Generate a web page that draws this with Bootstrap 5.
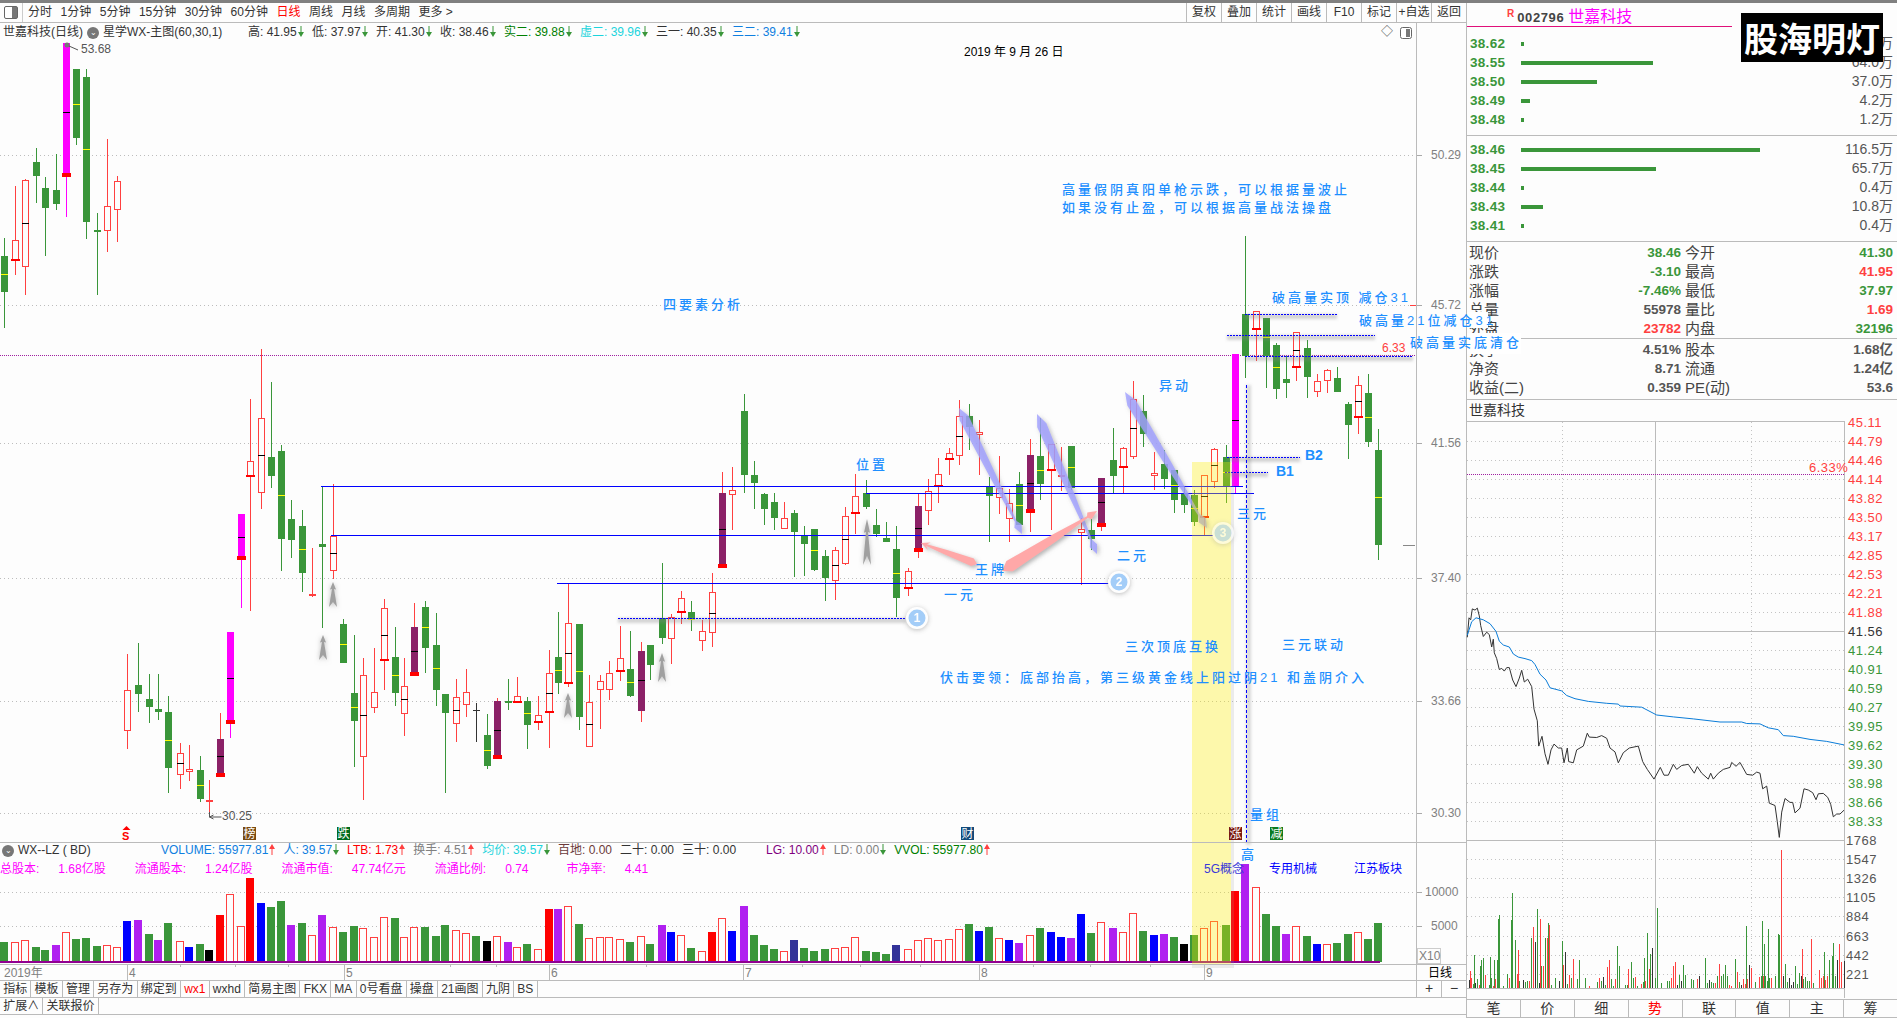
<!DOCTYPE html>
<html lang="zh-CN">
<head>
    <meta charset="UTF-8">
    <meta name="viewport" content="width=device-width, initial-scale=1.0">
    <title>世嘉科技</title>
    <link href="https://cdn.jsdelivr.net/npm/bootstrap@5.3.3/dist/css/bootstrap.min.css" rel="stylesheet">
    <style>
        html, body { height: 100%; overflow: hidden; }
        body {
            background-color: #fdfdfd;
            color: #333;
            font: 12px/1.2 "Liberation Sans", "Noto Sans CJK SC", sans-serif;
        }
        .screen { height: 1018px; border-top: 3px solid #808080; }
        .left-col { width: 1466px; flex: none; position: relative; z-index: 2; }
        .top-tools { height: 19px; border-bottom: 1px solid #bbb; box-sizing: content-box; white-space: nowrap; }
        .side-btn { width: 23px; padding-left: 4px; border-right: 1px solid #ccc; }
        .side-ico { width: 14px; height: 13px; border: 1px solid #666; border-radius: 2px; background: linear-gradient(90deg, #fff 55%, #777 55%); }
        .period-list { gap: 8.5px; padding-left: 5px; }
        .period-on { color: #f00; }
        .tool-cell { width: 35px; border-left: 1px solid #bbb; text-align: center; line-height: 18px; }
        .plot-wrap { height: 957px; }
        #plot { position: absolute; left: 0; top: 0; overflow: visible; z-index: 0; }
        #plot text { font-family: "Liberation Sans", "Noto Sans CJK SC", sans-serif; font-size: 12px; }
        #plot .note { fill: #1e8fff; font-size: 13px; letter-spacing: 3px; font-weight: 500; }
        #plot .note-b { fill: #1e8fff; font-size: 14px; font-weight: 700; }
        #plot .axis-txt { fill: #808080; }
        #plot .tag { fill: #fff; font-size: 12px; }
        .quote-row { height: 19px; padding-left: 3px; position: relative; white-space: nowrap; line-height: 19px; }
        .quote-head { width: 245px; }
        .quote-ico { width: 12px; height: 12px; border-radius: 50%; background: #777; color: #fff; font-size: 8px; line-height: 12px; text-align: center; margin: 0 4px; }
        .quote-item { width: 64px; }
        .quote-wide { width: 76px; }
        .arr { width: 6px; height: 11px; margin-left: 1px; vertical-align: -1px; }
        .arr-dn { fill: #3a963a; }
        .arr-up { fill: #ff4040; }
        .c-green { color: #008000; }
        .c-cyan { color: #1cd4dc; }
        .c-blue { color: #0f7fe0; }
        .c-red { color: #f00; }
        .c-gray { color: #808080; }
        .c-brown { color: #6b3a3a; }
        .c-purple { color: #800080; }
        .c-vol { color: #0f7fe0; }
        .vol-head { position: relative; margin-top: 801px; white-space: nowrap; }
        .vol-line1 { height: 17px; line-height: 15px; padding-left: 2px; }
        .vol-name { width: 159px; height: 15px; }
        .vol-gap { margin-right: 8px; }
        .vol-far { margin-left: 30px; }
        .vol-line2 { height: 19px; line-height: 19px; color: #ff00ff; gap: 29px; }
        .cap-item { gap: 19px; }
        .cap-wide { margin-right: 9px; }
        .bot-row { height: 17px; border-top: 1px solid #bbb; white-space: nowrap; line-height: 16px; }
        .bot-row-2 { height: 18px; border-bottom: 1px solid #bbb; line-height: 17px; }
        .bot-btn { padding: 0 3.2px; border-right: 1px solid #bbb; }
        .zoom-cells { width: 50px; margin-right: 0; }
        .zoom-cell { width: 25px; border-left: 1px solid #bbb; text-align: center; font-size: 14px; line-height: 15px; }
        .right-col { flex: 1; border-left: 1px solid #bbb; position: relative; color: #555; }
        .stock-head { height: 24px; width: 265px; border-bottom: 1px solid #e0107a; white-space: nowrap; padding-left: 40px; line-height: 22px; }
        .stock-r { color: #ff4040; font-weight: 700; font-size: 10px; vertical-align: 5px; margin-right: 3px; }
        .stock-code { color: #444; font-size: 13px; font-weight: 700; letter-spacing: .6px; margin-right: 4px; }
        .stock-name { color: #ff00ff; font-size: 16px; }
        .logo-box {
            position: absolute; top: 10px; right: 14px; width: 142px; height: 49px; background: #000; color: #fff;
            font-size: 34px; font-weight: 700; line-height: 49px; text-align: center; font-family: "Noto Sans CJK SC", sans-serif; white-space: nowrap;
            z-index: 3;
        }
        .book { font-size: 14px; }
        .book-sell { padding: 7px 0 6px; border-bottom: 1px solid #bbb; }
        .book-buy { padding: 4px 0 6px; border-bottom: 1px solid #bbb; }
        .book-row { height: 19px; line-height: 19px; padding: 0 4px 0 3px; }
        .book-price { width: 51px; flex: none; color: #3a963a; font-weight: 700; font-size: 13.5px; letter-spacing: .3px; }
        .book-bar { height: 4px; background: #3a963a; }
        .stat-row { height: 19px; line-height: 19px; padding: 0 4px 0 2px; font-size: 13.5px; font-weight: 700; color: #555; }
        .stat-label { width: 60px; font-weight: 400; font-size: 15px; color: #444; white-space: nowrap; }
        .stat-val { width: 152px; text-align: right; }
        .stat-label2 { width: 32px; margin-left: 4px; font-weight: 400; font-size: 15px; color: #444; white-space: nowrap; }
        .stat-end { flex: 1; text-align: right; }
        .val-green { color: #3a963a; }
        .val-red { color: #ff4040; }
        .stats-a { padding-top: 1px; border-bottom: 1px solid #bbb; }
        .stats-b { padding: 1px 0 2px; border-bottom: 1px solid #bbb; }
        .mini-title { height: 21px; line-height: 21px; padding-left: 2px; font-size: 14px; color: #333; }
        #mini { display: block; overflow: visible; }
        #mini text { font-family: "Liberation Sans", sans-serif; font-size: 13px; letter-spacing: .5px; }
        .tab-row { height: 17px; border-top: 1px solid #bbb; border-bottom: 1px solid #bbb; box-sizing: content-box; }
        .tab-cell { flex: 1; text-align: center; border-right: 1px solid #bbb; font-size: 14px; line-height: 17px; color: #333; }
        .tab-cell:last-child { border-right: 0; }
        .tab-on { color: #f00; }
    </style>
</head>
<body>
<svg width="0" height="0" class="d-block">
    <symbol id="ar-dn" viewBox="0 0 6 11"><rect x="2.5" y="0" width="1" height="7"/><path d="M0 6h6l-3 5z"/></symbol>
    <symbol id="ar-up" viewBox="0 0 6 11"><rect x="2.5" y="4" width="1" height="7"/><path d="M0 5h6l-3-5z"/></symbol>
</svg>
<div class="screen d-flex">
    <div class="left-col d-flex flex-column">
        <div class="top-tools d-flex justify-content-between">
            <div class="d-flex align-items-center">
                <div class="side-btn h-100 d-flex align-items-center"><div class="side-ico"></div></div>
                <div class="period-list d-flex align-items-center">
                    <span>分时</span><span>1分钟</span><span>5分钟</span><span>15分钟</span><span>30分钟</span><span>60分钟</span>
                    <span class="period-on">日线</span><span>周线</span><span>月线</span><span>多周期</span><span>更多 &gt;</span>
                </div>
            </div>
            <div class="d-flex">
                <div class="tool-cell">复权</div><div class="tool-cell">叠加</div><div class="tool-cell">统计</div><div class="tool-cell">画线</div>
                <div class="tool-cell">F10</div><div class="tool-cell">标记</div><div class="tool-cell">+自选</div><div class="tool-cell">返回</div>
            </div>
        </div>
        <div class="plot-wrap position-relative">
            <svg id="plot" width="1466" height="957" viewBox="0 23 1466 957"></svg>
            <div class="quote-row d-flex">
                <div class="quote-head d-flex align-items-center">世嘉科技(日线)<span class="quote-ico">&#8964;</span>星学WX-主图(60,30,1)</div>
                <div class="quote-item">高: 41.95<svg class="arr arr-dn"><use href="#ar-dn"/></svg></div>
                <div class="quote-item">低: 37.97<svg class="arr arr-dn"><use href="#ar-dn"/></svg></div>
                <div class="quote-item">开: 41.30<svg class="arr arr-dn"><use href="#ar-dn"/></svg></div>
                <div class="quote-item">收: 38.46<svg class="arr arr-dn"><use href="#ar-dn"/></svg></div>
                <div class="quote-wide c-green">实二: 39.88<svg class="arr arr-dn"><use href="#ar-dn"/></svg></div>
                <div class="quote-wide c-cyan">虚二: 39.96<svg class="arr arr-dn"><use href="#ar-dn"/></svg></div>
                <div class="quote-wide">三一: 40.35<svg class="arr arr-dn"><use href="#ar-dn"/></svg></div>
                <div class="quote-wide c-blue">三二: 39.41<svg class="arr arr-dn"><use href="#ar-dn"/></svg></div>
            </div>
            <div class="vol-head">
                <div class="vol-line1 d-flex">
                    <div class="vol-name d-flex align-items-center"><span class="quote-ico ms-0">&#8964;</span>WX--LZ ( BD)</div>
                    <div class="vol-gap c-vol">VOLUME: 55977.81<svg class="arr arr-up"><use href="#ar-up"/></svg></div>
                    <div class="vol-gap c-vol">人: 39.57<svg class="arr arr-dn"><use href="#ar-dn"/></svg></div>
                    <div class="vol-gap c-red">LTB: 1.73<svg class="arr arr-up"><use href="#ar-up"/></svg></div>
                    <div class="vol-gap c-gray">换手: 4.51<svg class="arr arr-up"><use href="#ar-up"/></svg></div>
                    <div class="vol-gap c-cyan">均价: 39.57<svg class="arr arr-dn"><use href="#ar-dn"/></svg></div>
                    <div class="vol-gap c-brown">百地: 0.00</div>
                    <div class="vol-gap">二十: 0.00</div>
                    <div>三十: 0.00</div>
                    <div class="vol-gap vol-far c-purple">LG: 10.00<svg class="arr arr-up"><use href="#ar-up"/></svg></div>
                    <div class="vol-gap c-gray">LD: 0.00<svg class="arr arr-dn"><use href="#ar-dn"/></svg></div>
                    <div class="c-green">VVOL: 55977.80<svg class="arr arr-up"><use href="#ar-up"/></svg></div>
                </div>
                <div class="vol-line2 d-flex">
                    <div class="cap-item d-flex"><span>总股本:</span><span>1.68亿股</span></div>
                    <div class="cap-item d-flex"><span>流通股本:</span><span>1.24亿股</span></div>
                    <div class="cap-item d-flex"><span>流通市值:</span><span>47.74亿元</span></div>
                    <div class="cap-item d-flex cap-wide"><span>流通比例:</span><span>0.74</span></div>
                    <div class="cap-item d-flex"><span>市净率:</span><span>4.41</span></div>
                </div>
            </div>
        </div>
        <div class="bot-row d-flex justify-content-between">
            <div class="d-flex">
                <div class="bot-btn">指标</div><div class="bot-btn">模板</div><div class="bot-btn">管理</div><div class="bot-btn">另存为</div>
                <div class="bot-btn">绑定到</div><div class="bot-btn c-red">wx1</div><div class="bot-btn">wxhd</div><div class="bot-btn">简易主图</div>
                <div class="bot-btn">FKX</div><div class="bot-btn">MA</div><div class="bot-btn">0号看盘</div><div class="bot-btn">操盘</div>
                <div class="bot-btn">21画图</div><div class="bot-btn">九阴</div><div class="bot-btn">BS</div>
            </div>
            <div class="zoom-cells d-flex">
                <div class="zoom-cell">+</div><div class="zoom-cell">&minus;</div>
            </div>
        </div>
        <div class="bot-row bot-row-2 d-flex">
            <div class="bot-btn">扩展∧</div><div class="bot-btn">关联报价</div>
        </div>
    </div>

    <div class="right-col">
        <div class="stock-head"><span class="stock-r">R</span><span class="stock-code">002796</span><span class="stock-name">世嘉科技</span></div>
        <div class="logo-box">股海明灯</div>
        <div class="book book-sell" id="sellRows"></div>
        <div class="book book-buy" id="buyRows"></div>
        <div class="stats-a">
            <div class="stat-row d-flex"><span class="stat-label">现价</span><span class="stat-val val-green">38.46</span><span class="stat-label2">今开</span><span class="stat-end val-green">41.30</span></div>
            <div class="stat-row d-flex"><span class="stat-label">涨跌</span><span class="stat-val val-green">-3.10</span><span class="stat-label2">最高</span><span class="stat-end val-red">41.95</span></div>
            <div class="stat-row d-flex"><span class="stat-label">涨幅</span><span class="stat-val val-green">-7.46%</span><span class="stat-label2">最低</span><span class="stat-end val-green">37.97</span></div>
            <div class="stat-row d-flex"><span class="stat-label">总量</span><span class="stat-val">55978</span><span class="stat-label2">量比</span><span class="stat-end val-red">1.69</span></div>
            <div class="stat-row d-flex"><span class="stat-label">外盘</span><span class="stat-val val-red">23782</span><span class="stat-label2">内盘</span><span class="stat-end val-green">32196</span></div>
        </div>
        <div class="stats-b">
            <div class="stat-row d-flex"><span class="stat-label">换手</span><span class="stat-val">4.51%</span><span class="stat-label2">股本</span><span class="stat-end">1.68亿</span></div>
            <div class="stat-row d-flex"><span class="stat-label">净资</span><span class="stat-val">8.71</span><span class="stat-label2">流通</span><span class="stat-end">1.24亿</span></div>
            <div class="stat-row d-flex"><span class="stat-label">收益(二)</span><span class="stat-val">0.359</span><span class="stat-label2">PE(动)</span><span class="stat-end">53.6</span></div>
        </div>
        <div class="mini-title">世嘉科技</div>
        <svg id="mini" width="430" height="578" viewBox="1467 421 430 578"></svg>
        <div class="tab-row d-flex">
            <div class="tab-cell">笔</div><div class="tab-cell">价</div><div class="tab-cell">细</div><div class="tab-cell tab-on">势</div>
            <div class="tab-cell">联</div><div class="tab-cell">值</div><div class="tab-cell">主</div><div class="tab-cell">筹</div>
        </div>
    </div>
</div>

<script src="https://cdn.jsdelivr.net/npm/bootstrap@5.3.3/dist/js/bootstrap.bundle.min.js"></script>
<script>
    // order book
    const sell = [['38.62', 3, '0.4万'], ['38.55', 132, '64.0万'], ['38.50', 76, '37.0万'], ['38.49', 9, '4.2万'], ['38.48', 3, '1.2万']];
    const buy = [['38.46', 239, '116.5万'], ['38.45', 135, '65.7万'], ['38.44', 3, '0.4万'], ['38.43', 22, '10.8万'], ['38.41', 3, '0.4万']];
    const bookHtml = rows => rows.map(r => `<div class="book-row d-flex align-items-center"><span class="book-price">${r[0]}</span><span class="book-bar" style="width:${r[1]}px"></span><span class="ms-auto">${r[2]}</span></div>`).join('');
    document.querySelector('#sellRows').innerHTML = bookHtml(sell);
    document.querySelector('#buyRows').innerHTML = bookHtml(buy);

    const GREEN = '#3a963a', RED = '#ff4040', PURPLE = '#8b2167', MAGENTA = '#ff00ff', BG = '#fdfdfd';

    // x, high, body top, body bottom, low, type, mid line y, foot
    const candles = [
        [4,238,256,292,328,'g',274],[15,186,240,260,275,'r',0,1],[25,179,180,267,295,'r',223],[36,148,162,176,203,'g'],[45,177,188,208,256,'g'],[56,154,190,204,210,'g'],
        [66,43,43,173,217,'m',112,1],[76,69,69,138,145,'g',104],[86,69,77,222,239,'g',149],[97,213,230,231,295,'g'],[107,139,206,231,252,'r'],[117,176,181,210,242,'r'],
        [127,654,690,731,749,'r'],[138,643,685,694,712,'g'],[149,674,699,707,723,'g'],[158,674,709,712,720,'g'],[168,696,712,768,793,'g',740],[180,743,753,775,789,'r',763],
        [189,745,769,772,781,'r'],[200,756,770,799,802,'g',785],[209,780,800,802,817,'r'],[220,713,739,773,777,'p',756,1],[230,720,632,720,738,'m',678,1],[241,556,514,556,608,'m',537,1],
        [250,399,461,476,611,'r',0,1],[261,349,418,493,509,'r',455],[271,382,457,476,488,'g'],[281,445,451,539,571,'g',495],[291,500,519,540,558,'g'],[302,510,526,573,592,'g',549],
        [312,548,594,595,597,'r'],[322,486,544,547,628,'g'],[333,484,536,571,579,'r',553],[343,619,624,663,663,'g',644],[354,635,693,721,767,'g',707],[363,658,675,757,800,'r',715],
        [374,648,692,708,713,'r'],[384,599,608,660,690,'r',635,1],[395,627,657,693,706,'g',675],[404,658,686,714,736,'r',699],[414,603,627,672,675,'p',651,1],[425,601,607,648,673,'g',627],
        [436,613,645,690,706,'g',668],[445,694,694,713,793,'g'],[456,679,697,724,742,'r',710],[466,669,692,705,717,'r'],[476,703,710,710,742,'k'],[487,714,735,766,769,'g',750],
        [497,698,701,755,757,'p',730,1],[508,679,701,703,710,'g'],[517,677,696,702,703,'r',0,1],[527,697,701,725,749,'g',713],[538,696,715,722,730,'r',0,1],[549,650,673,712,748,'r',693,1],
        [558,612,657,683,694,'g',670],[568,584,623,683,687,'r',653,1],[579,624,624,717,730,'g',671],[589,675,702,747,747,'r',724],[600,675,681,690,729,'r'],[609,661,673,690,700,'r'],
        [620,626,658,671,681,'r',0,1],[630,631,669,696,697,'g',682],[641,642,651,711,722,'p',680],[650,645,645,665,680,'g'],[662,563,618,638,644,'g'],[671,614,617,639,664,'r'],
        [681,591,598,612,624,'r',0,1],[691,601,612,620,631,'g',619],[702,620,631,641,651,'r'],[712,573,592,633,647,'r',613],[722,472,493,564,566,'p',529,1],[732,467,490,495,530,'r'],
        [744,394,411,475,493,'g'],[754,461,475,483,509,'g'],[764,493,494,509,525,'g'],[774,493,502,518,530,'g'],[784,502,518,529,529,'r'],[794,510,513,532,577,'g'],
        [804,526,536,544,576,'g'],[814,529,529,570,571,'g',550],[825,550,556,578,601,'g'],[835,547,550,581,600,'r',565],[845,507,516,564,565,'r',539],[855,474,496,513,534,'r',0,1],
        [866,480,493,507,509,'g'],[876,509,525,534,537,'g'],[886,522,538,542,542,'g'],[896,526,549,598,617,'g',573],[908,568,571,588,596,'r',0,1],[918,494,506,548,558,'p',528,1],
        [928,479,491,511,525,'r'],[938,458,474,486,503,'r',0,2],[949,448,453,459,475,'r',0,1],[959,400,416,456,465,'r',436],[969,404,416,427,450,'g'],[979,420,432,435,475,'r'],
        [989,477,487,496,542,'g'],[999,456,488,498,514,'r'],[1009,489,503,519,542,'r'],[1019,472,484,525,525,'g',505],[1030,439,455,509,532,'p',483,1],[1040,418,456,484,500,'g',470],
        [1051,444,444,470,530,'r',0,1],[1061,447,475,475,491,'r'],[1071,446,446,488,490,'g',467],[1081,518,529,533,585,'r'],[1091,519,530,539,550,'g'],[1101,478,478,523,531,'p',502,1],
        [1113,428,460,476,493,'g'],[1123,447,448,467,493,'r',0,1],[1133,381,399,457,459,'r',428],[1143,395,411,434,447,'g'],[1154,452,473,476,490,'r'],[1164,450,464,479,489,'g'],
        [1174,470,470,500,513,'g',485],[1184,487,493,505,513,'g'],[1194,490,495,522,526,'g',508],[1204,475,475,517,535,'r',496,1],[1214,448,449,482,488,'r',465],[1226,445,457,486,503,'g',472],
        [1235,354,354,487,493,'m',420],[1245,236,314,356,378,'g'],[1256,311,311,329,361,'r',0,2],[1266,318,318,356,388,'g',337],[1276,343,345,389,399,'g',367],[1286,356,379,383,398,'g'],
        [1296,332,332,367,381,'r',350,1],[1307,340,348,377,398,'g'],[1317,374,381,392,397,'r'],[1327,369,370,381,393,'r'],[1337,367,378,392,392,'g'],[1348,402,404,425,459,'g'],
        [1358,376,385,417,434,'r',401,1],[1368,374,393,442,447,'g',417],[1378,429,450,545,560,'g',497]
    ];
    // top of volume bar as read off the crop, type
    const vols = '336g 337h 331h 351g 360g 345p 307h 327g 324g 348g 346h 352h 273b 270p 312g 330p 279g 334h 351b 342g 360k 255r 193h 288h 144r 219b 231g 213g 285p 279g 315h 255p 291h 306g 288g 295h 321h 261h 264g 321h 291h 291g 318g 285g 300h 309h 318g 333k 318h 336p 351h 342g 357h 237r 237p 228h 282g 324h 321h 321h 327h 336g 318h 342g 285p 306b 315h 354g 363h 306r 264h 303b 228p 315g 345g 357g 363h 330i 354g 363g 357g 354h 351h 321h 363g 366g 372g 345i 357h 330h 324h 330h 327h 297h 282g 303b 291g 324h 330b 339p 315h 294g 306b 321b 324p 252b 309g 276h 294p 306h 249h 303g 315b 312p 321g 342k 315g 294h 273h 285g 183r 103p 171h 252g 288g 312p 288h 318g 342b 342h 339g 312g 306h 327g 279g'.split(' ');
    const volColors = { g: GREEN, r: '#ff0000', b: '#0000ff', p: '#b020f0', k: '#000', i: '#333399' };

    const rect = (x, y, w, h, fill, extra = '') => `<rect x="${x}" y="${y}" width="${w}" height="${h}" fill="${fill}" ${extra}/>`;
    const hline = (x1, x2, y, color, dash = '', w = 1) => `<line x1="${x1}" x2="${x2}" y1="${y}.5" y2="${y}.5" stroke="${color}" stroke-width="${w}" stroke-dasharray="${dash}"/>`;
    const text = (x, y, s, cls = '', fill = '') => `<text x="${x}" y="${y + 4}" class="${cls}" ${fill ? `fill="${fill}"` : ''}>${s}</text>`;
    // dashed hand drawn line with the blurred shadow it has on the chart
    const shadowLine = (a, b, y) => rect(a, y, b - a, 5, '#888', 'fill-opacity=".35" filter="url(#blur)"') + hline(a, b, y, '#0000ff', '2 1');

    let g = '';
    g += `<defs>
        <filter id="soft" x="-40%" y="-40%" width="180%" height="180%"><feDropShadow dx="2" dy="2" stdDeviation="2" flood-color="#777" flood-opacity=".55"/></filter>
        <filter id="halo" x="-60%" y="-60%" width="220%" height="220%"><feDropShadow dx="0" dy="1" stdDeviation="2.5" flood-color="#999" flood-opacity=".7"/></filter>
        <filter id="blur" x="-10%" y="-300%" width="120%" height="700%"><feGaussianBlur stdDeviation="1.5"/></filter>
        <filter id="blur-v" x="-300%" y="-10%" width="700%" height="120%"><feGaussianBlur stdDeviation="1.5"/></filter>
    </defs>`;

    // grid and price axis
    [[155, '50.29'], [305, '45.72'], [443, '41.56'], [578, '37.40'], [701, '33.66'], [813, '30.30']].forEach(([y, s]) => {
        g += hline(0, 1416, y, '#bdbdbd', '1 3');
        g += hline(1416, 1422, y, '#aaa');
        g += text(1431, y, s, 'axis-txt');
    });
    [892, 926].forEach(y => { g += hline(0, 1416, y, '#bdbdbd', '1 3'); g += hline(1416, 1422, y, '#aaa'); });
    g += text(1425, 892, '10000', 'axis-txt') + text(1431, 926, '5000', 'axis-txt');
    g += hline(0, 1416, 355, '#a020a0', '1 1');
    g += hline(1410, 1416, 305, RED) + hline(1403, 1415, 545, '#888');
    g += text(1382, 348, '6.33', '', RED);

    // volume
    candles.forEach((c, i) => {
        const v = vols[i], top = Math.round(830 + parseInt(v) / 3), kind = v.slice(-1), x = c[0] - 4, h = 962 - top;
        if (kind === 'h') g += `<rect x="${x + .5}" y="${top + .5}" width="7" height="${h}" fill="${BG}" stroke="${RED}"/>`;
        else g += rect(x, top, 8, h, volColors[kind]);
    });
    g += rect(0, 961, 1380, 2, '#900090');

    // candles
    candles.forEach(c => {
        const [x, hi, top, bot, lo, t, mid, foot] = c;
        const col = t === 'g' ? GREEN : t === 'k' ? '#333' : RED;
        const lowCol = t === 'm' ? MAGENTA : col;
        if (hi < top) g += rect(x, hi, 1, top - hi, col);
        if (lo > bot) g += rect(x, bot, 1, lo - bot, lowCol);
        if (bot - top < 2) g += rect(x - 3, top, 7, t === 'k' ? 1 : 2, col);
        else if (t === 'r') g += `<rect x="${x - 2.5}" y="${top + .5}" width="6" height="${bot - top - 1}" fill="${BG}" stroke="${RED}"/>`;
        else g += rect(x - 3, top, 7, bot - top, t === 'g' ? GREEN : t === 'p' ? PURPLE : MAGENTA);
        if (mid) g += rect(x - 3, mid, 7, 1, t === 'g' ? '#ffff00' : '#000');
        if (foot === 1 && t !== 'r') g += rect(x - 4, bot, 9, 4, '#ff0000');
        if (foot) g += t === 'r' ? rect(x - 4, bot - 1, 9, 2, '#ff0000') : '';
    });

    // support lines
    g += hline(321, 1243, 486, '#0000ff');
    g += hline(331, 1213, 535, '#0000ff');
    g += hline(866, 1254, 493, '#0000ff');
    g += hline(557, 1109, 583, '#0000ff');
    g += shadowLine(618, 906, 618);
    [[1245, 1337, 314], [1227, 1375, 335], [1245, 1413, 356], [1227, 1300, 457], [1225, 1268, 472]].forEach(([a, b, y]) => { g += shadowLine(a, b, y); });
    g += rect(1246, 385, 5, 460, '#888', 'fill-opacity=".3" filter="url(#blur-v)"');
    g += `<line x1="1246.5" x2="1246.5" y1="385" y2="845" stroke="#0000ff" stroke-dasharray="3 2"/>`;

    // tapered strokes drawn by hand on the chart
    const strip = (x1, y1, x2, y2, w, fill, op) => {
        const dx = x2 - x1, dy = y2 - y1, len = Math.hypot(dx, dy), ux = dx / len, uy = dy / len, nx = -uy, ny = ux;
        const p = (f, o) => `${(x1 + dx * f + nx * o).toFixed(1)},${(y1 + dy * f + ny * o).toFixed(1)}`;
        const tip = p(1, 0), back = 9 / len;
        const pts = [p(0, 0), p(.08, w / 2), p(.55, w * .32), p(.9, 1), p(1 - back, 4), tip, p(1 - back, -4), p(.9, -1), p(.55, -w * .32), p(.08, -w / 2)];
        return `<polygon points="${pts.join(' ')}" fill="${fill}" fill-opacity="${op}" filter="url(#soft)"/>`;
    };
    g += strip(959, 408, 1022, 534, 10, '#a0a0ff', .8);
    g += strip(1037, 414, 1097, 554, 10, '#a0a0ff', .8);
    g += strip(1125, 392, 1207, 528, 10, '#a0a0ff', .8);
    g += strip(977, 564, 921, 543, 8, '#ffa8a8', 1);
    g += strip(1002, 571, 1097, 511, 12, '#ffa8a8', 1);

    // grey up arrows
    [[333, 582, 25], [323, 635, 25], [568, 693, 25], [662, 653, 29], [867, 519, 46]].forEach(([x, y, h]) => {
        g += `<polygon points="${x},${y} ${x + 3},${y + h * .3} ${x + 1},${y + h * .28} ${x + 4},${y + h} ${x},${y + h * .8} ${x - 4},${y + h} ${x - 1},${y + h * .28} ${x - 3},${y + h * .3}" fill="#a0a0a0" filter="url(#halo)"/>`;
    });

    // yellow band
    g += `<rect x="1192" y="462" width="39" height="503" fill="#fff000" fill-opacity=".32"/>`;
    g += rect(1231, 464, 3, 501, '#999', 'fill-opacity=".18"') + rect(1192, 965, 42, 3, '#999', 'fill-opacity=".18"');

    // numbered circles
    [[917, 618, '1', .95], [1119, 582, '2', .95], [1223, 533, '3', .55]].forEach(([x, y, n, o]) => {
        g += `<g opacity="${o}"><circle cx="${x}" cy="${y}" r="11" fill="#fff" filter="url(#halo)"/><circle cx="${x}" cy="${y}" r="8.5" fill="#9fcbf8"/>`;
        g += `<text x="${x}" y="${y + 4}" text-anchor="middle" fill="#fff" font-weight="700">${n}</text></g>`;
    });

    // hide what the notes cover on the right panel
    g += rect(1467, 312, 21, 16, '#fff') + rect(1467, 333, 54, 21, '#fff');

    // notes
    const notes = [
        [663, 305, '四要素分析'], [1062, 190, '高量假阴真阳单枪示跌，可以根据量波止'], [1062, 208, '如果没有止盈，可以根据高量战法操盘'],
        [1272, 298, '破高量实顶 减仓31'], [1359, 321, '破高量21位减仓31'], [1410, 343, '破高量实底清仓'], [1159, 386, '异动'], [856, 465, '位置'],
        [1237, 514, '三元'], [1117, 556, '二元'], [944, 595, '一元'], [975, 570, '王牌'], [1125, 647, '三次顶底互换'], [1282, 645, '三元联动'],
        [940, 678, '伏击要领：底部抬高，第三级黄金线上阳过阴21 和盖阴介入'], [1250, 815, '量组'], [1241, 855, '高']
    ];
    notes.forEach(n => { g += text(n[0], n[1], n[2], 'note'); });
    g += text(1305, 456, 'B2', 'note-b') + text(1276, 472, 'B1', 'note-b');

    // date line and header bits
    g += text(964, 52, '2019 年 9 月 26 日');
    g += text(1381, 32, '◇', '', '#555');
    g += `<rect x="1400.5" y="27.5" width="11" height="11" rx="2" fill="#fff" stroke="#666"/>` + rect(1406, 29, 4, 8, '#777');
    g += text(81, 49, '53.68', '', '#555');
    g += `<circle cx="67" cy="45" r="2.5" fill="#777"/><path d="M69 46l9 4" stroke="#555" fill="none"/>`;
    g += text(222, 816, '30.25', '', '#555');
    g += `<path d="M209.5 812v5h12M209.5 817l4-2M209.5 817l4 2" stroke="#555" fill="none"/>`;

    // event tags
    [[243, '榜', '#7a4a10'], [337, '跌', '#006a1e'], [961, '财', '#114a7a'], [1229, '涨', '#7a1a10'], [1270, '减', '#0a7a1e']].forEach(([x, s, col]) => {
        g += rect(x, 827, 13, 13, col) + `<text x="${x + .5}" y="838" class="tag">${s}</text>`;
    });
    g += `<text x="122" y="840" fill="#f00" font-weight="700" style="font-size:11px">S</text><path d="M122.5 830h8l-4-4z" fill="#f00"/>`;

    // volume pane tags
    g += text(1204, 869, '5G概念', '', '#3a3ad8') + text(1269, 869, '专用机械', '', '#0000ff') + text(1354, 869, '江苏板块', '', '#0000ff');
    g += `<rect x="1417.5" y="948.5" width="23" height="15" fill="${BG}" stroke="#ccc"/>` + text(1419, 956, 'X10', 'axis-txt');

    // date axis
    g += hline(0, 1466, 964, '#bbb');
    [127, 344, 549, 743, 979, 1204].forEach(x => { g += rect(x, 964, 1, 16, '#bbb'); });
    [180, 235, 288, 450, 496, 646, 802, 860, 920, 1033, 1090, 1150].forEach(x => { g += rect(x, 964, 1, 3, '#bbb'); });
    [[4, '2019年'], [129, '4'], [346, '5'], [551, '6'], [745, '7'], [981, '8'], [1206, '9']].forEach(([x, s]) => { g += text(x, 973, s, 'axis-txt'); });
    g += rect(1416, 23, 1, 957, '#bbb') + rect(0, 842, 1466, 1, '#bbb');
    g += text(1428, 973, '日线');

    document.querySelector('#plot').innerHTML = g;

    // intraday panel
    let m = '';
    const Z = (x, y) => [1460 + x / 3, 410 + y / 2.574];
    const poly = (pts, col) => `<polyline fill="none" stroke="${col}" stroke-width="1" points="${pts.map(p => Z(p[0], p[1]).map(v => v.toFixed(1)).join(',')).join(' ')}"/>`;
    const L = 1467, R = 1844;
    for (let i = 1; i < 30; i++) {
        const y = Math.round(421.7 + 19.03 * i);
        if (i === 11 || i === 22) m += hline(L, R, y, '#bbb');
        else m += hline(L, R, y, '#c4c4c4', '1 3');
    }
    m += hline(L, R + 1, 421, '#bbb') + hline(L, R + 1, 988, '#bbb');
    m += `<line x1="1562.5" x2="1562.5" y1="422" y2="988" stroke="#c4c4c4" stroke-dasharray="1 3"/>`;
    m += `<line x1="1655.5" x2="1655.5" y1="422" y2="988" stroke="#bbb"/>`;
    m += `<line x1="1751.5" x2="1751.5" y1="422" y2="988" stroke="#c4c4c4" stroke-dasharray="1 3"/>`;
    m += rect(R, 421, 1, 577, '#bbb');
    m += hline(L, R, 474, '#a020a0', '1 1');
    m += `<text x="1809" y="472" fill="${RED}">6.33%</text>`;

    const labels = ['45.11','44.79','44.46','44.14','43.82','43.50','43.17','42.85','42.53','42.21','41.88','41.56','41.24','40.91','40.59','40.27','39.95','39.62','39.30','38.98','38.66','38.33','1768','1547','1326','1105','884','663','442','221'];
    labels.forEach((s, i) => {
        const y = Math.round(421.7 + 19.03 * i) + 5;
        const fill = i < 11 ? RED : i === 11 ? '#333' : i < 22 ? GREEN : '#555';
        m += `<text x="${i < 22 ? 1848 : 1846}" y="${y}" fill="${fill}">${s}</text>`;
    });

    // intraday volume: seeded noise plus the peaks read off the reference
    let seed = 42;
    const rnd = () => (seed = (seed * 1103515245 + 12345) % 2147483648) / 2147483648;
    for (let x = 1469; x < R; x += 2) {
        const r = rnd(), h = r < .2 ? 0 : r < .8 ? 2 + rnd() * 11 : 8 + rnd() * 24;
        const c = rnd();
        if (h) m += rect(x, Math.round(988 - h), 1, Math.round(h), c < .55 ? GREEN : c < .9 ? RED : '#333');
    }
    const peaks = [[115,1310,'g'],[118,1300,'g'],[152,1312,'g'],[156,1243,'g'],[166,1365,'g'],[174,1390,'r'],[213,1360,'g'],[220,1330,'r'],[226,1370,'k'],[232,1285,'g'],[240,1310,'r'],[255,1360,'g'],[260,1358,'r'],[265,1320,'g'],[268,1325,'r'],[307,1367,'g'],[316,1395,'k'],[472,1380,'g'],[552,1410,'g'],[562,1345,'g'],[570,1400,'g'],[577,1385,'k'],[592,1282,'g'],[857,1328,'g'],[858,1385,'g'],[907,1315,'g'],[913,1375,'g'],[925,1337,'g'],[955,1350,'g'],[958,1352,'g'],[964,1132,'r'],[1025,1388,'r'],[1054,1362,'r'],[1093,1395,'g'],[1120,1372,'g'],[1138,1375,'r'],[1130,1415,'k'],[1153,1418,'k'],[1115,1405,'g'],[736,1410,'g'],[777,1425,'r'],[640,1430,'r'],[505,1440,'r'],[338,1412,'r'],[358,1415,'g'],[30,1445,'r'],[43,1403,'g'],[68,1410,'g'],[90,1408,'g'],[103,1415,'g'],[60,1430,'g']];
    const peakCol = { g: GREEN, r: RED, k: '#333' };
    peaks.forEach(([x, y, t]) => {
        const [px, py] = Z(x, y);
        m += rect(Math.round(px), Math.round(py), 1, Math.round(988 - py), peakCol[t]);
    });

    const price = [[22,585],[27,535],[32,540],[37,512],[45,515],[52,510],[58,530],[62,555],[70,583],[80,572],[88,578],[95,610],[100,590],[103,625],[110,640],[118,668],[125,665],[133,672],[140,663],[148,663],[158,695],[168,712],[178,690],[185,670],[193,700],[203,693],[215,712],[222,770],[232,800],[236,865],[246,840],[255,885],[264,912],[273,875],[282,860],[295,870],[305,870],[312,908],[322,870],[326,905],[340,908],[350,875],[370,865],[382,832],[388,842],[410,843],[425,838],[440,845],[450,870],[465,880],[475,908],[490,882],[508,870],[535,865],[548,905],[562,925],[582,950],[601,920],[612,940],[625,940],[640,912],[650,925],[665,915],[685,912],[703,935],[712,918],[725,935],[745,950],[752,935],[760,950],[775,935],[790,925],[810,920],[815,907],[828,917],[840,907],[860,938],[878,940],[890,932],[900,935],[908,975],[920,968],[928,1012],[945,1018],[952,1060],[958,1100],[965,1035],[975,1000],[990,1010],[998,1010],[1005,1037],[1020,1025],[1032,975],[1045,978],[1058,985],[1068,1003],[1075,988],[1090,987],[1103,997],[1112,1015],[1120,1047],[1130,1040],[1140,1040],[1152,1030]];
    const avg = [[22,580],[35,545],[48,535],[70,540],[90,550],[108,570],[118,595],[130,605],[148,610],[160,628],[175,636],[195,640],[215,645],[225,655],[240,680],[258,695],[270,715],[305,723],[320,735],[345,743],[385,750],[440,755],[475,757],[480,762],[545,765],[590,785],[640,790],[700,795],[780,803],[845,803],[860,807],[900,808],[925,818],[955,823],[970,838],[1000,840],[1050,848],[1100,853],[1152,862]];
    m += poly(price, '#333') + poly(avg, '#0a7cd8');
    document.querySelector('#mini').innerHTML = m;
</script>
</body>
</html>
